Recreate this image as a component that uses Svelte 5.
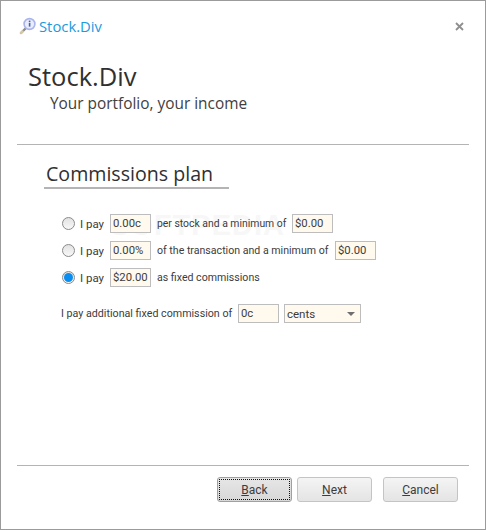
<script>
	let plan = $state('fixed');
	let perStock = $state('0.00c');
	let perStockMin = $state('$0.00');
	let percent = $state('0.00%');
	let percentMin = $state('$0.00');
	let fixed = $state('$20.00');
	let additional = $state('0c');
</script>

<div class="window">
	<header class="titlebar">
		<svg class="logo" width="18" height="18" viewBox="0 0 18 18">
			<path d="M7 11 L2 16" stroke="#8a8a8a" stroke-width="2.4" stroke-linecap="round" />
			<path d="M3.6 14.4 L2 16" stroke="#d8c9a8" stroke-width="2.4" stroke-linecap="round" />
			<circle cx="10.5" cy="7" r="5.4" fill="#e8ecfb" stroke="#a9b4ec" stroke-width="1.6" />
			<rect x="9.8" y="3.6" width="1.6" height="1.4" fill="#4a5fa8" />
			<rect x="9.8" y="5.8" width="1.6" height="3.8" fill="#4a5fa8" />
		</svg>
		<span class="app-name">Stock.Div</span>
		<span class="close">
			<svg width="9" height="9" viewBox="0 0 9 9">
				<path d="M1 1 L8 8 M8 1 L1 8" stroke="#8f8f8f" stroke-width="1.8" />
			</svg>
		</span>
	</header>

	<section class="hero">
		<h1>Stock.Div</h1>
		<p>Your portfolio, your income</p>
	</section>

	<main class="content">
		<h2>Commissions plan</h2>

		<div class="options">
			<span class="watermark">SOFTPEDIA</span>
			<div class="row">
				<input class="radio" type="radio" bind:group={plan} value="stock" />
				<span class="pay">I pay</span>
				<input class="field" bind:value={perStock} />
				<span class="stock-label">per stock and a minimum of</span>
				<input class="field small" bind:value={perStockMin} />
			</div>
			<div class="row">
				<input class="radio" type="radio" bind:group={plan} value="percent" />
				<span class="pay">I pay</span>
				<input class="field" bind:value={percent} />
				<span class="percent-label">of the transaction and a minimum of</span>
				<input class="field small" bind:value={percentMin} />
			</div>
			<div class="row">
				<input class="radio" type="radio" bind:group={plan} value="fixed" />
				<span class="pay">I pay</span>
				<input class="field" bind:value={fixed} />
				<span>as fixed commissions</span>
			</div>
		</div>

		<div class="additional">
			<span class="additional-label">I pay additional fixed commission of</span>
			<input class="field" bind:value={additional} />
			<div class="select">
				<span>cents</span>
				<i class="caret"></i>
			</div>
		</div>
	</main>

	<footer class="footer">
		<button class="btn focused"><span><u>B</u>ack</span></button>
		<button class="btn"><span><u>N</u>ext</span></button>
		<button class="btn cancel"><span><u>C</u>ancel</span></button>
	</footer>
</div>

<style>
	:global(body) {
		background: #fff;
	}

	.window {
		width: 486px;
		height: 530px;
		box-sizing: border-box;
		border: 1px solid #9b9b9b;
		background: #fff;
		display: flex;
		flex-direction: column;
		font-family: Roboto, sans-serif;
		font-size: 10.6px;
		color: #3c3c3c;
	}

	.titlebar {
		display: flex;
		align-items: center;
		height: 30px;
		margin-top: 10px;
		padding-left: 18px;
		padding-right: 21px;
	}

	.logo {
		margin-right: 2px;
	}

	.app-name {
		font-family: 'Open Sans', sans-serif;
		font-size: 14.8px;
		color: #1a9be0;
	}

	.close {
		margin-left: auto;
		display: flex;
	}

	.hero {
		height: 103px;
		border-bottom: 1px solid #b4b4b4;
		margin: 0 16px;
		padding-left: 11px;
	}

	h1 {
		margin: 17px 0 0;
		font-family: 'Open Sans', sans-serif;
		font-weight: 400;
		font-size: 25.5px;
		line-height: 36px;
		color: #303030;
	}

	.hero p {
		margin: 0 0 0 22px;
		font-family: 'Open Sans', sans-serif;
		font-size: 15.4px;
		line-height: 20px;
		color: #404040;
	}

	.content {
		flex: 1;
		padding-left: 43px;
	}

	h2 {
		margin: 16px 0 0;
		width: 185px;
		height: 28px;
		box-sizing: border-box;
		padding-left: 2px;
		border-bottom: 2px solid #b4b4b4;
		font-family: 'Open Sans', sans-serif;
		font-weight: 400;
		font-size: 19.6px;
		line-height: 26px;
		color: #303030;
		white-space: nowrap;
	}

	.options {
		position: relative;
		display: flex;
		flex-direction: column;
		gap: 8px;
		margin-top: 25px;
		padding-left: 18px;
	}

	.watermark {
		position: absolute;
		left: 66px;
		top: -5px;
		font-family: 'Liberation Sans', sans-serif;
		font-weight: 700;
		font-size: 29px;
		letter-spacing: 1px;
		color: #f7f7f7;
		pointer-events: none;
		z-index: 0;
	}

	.row {
		position: relative;
		display: flex;
		align-items: center;
		height: 19px;
		white-space: nowrap;
	}

	.pay {
		width: 25px;
		font-size: 11.5px;
	}

	.stock-label {
		width: 130px;
		font-size: 10.4px;
	}

	.percent-label {
		width: 173px;
	}

	.radio {
		appearance: none;
		width: 13px;
		height: 13px;
		margin: 0 5px 0 0;
		border: 1px solid #8a8a8a;
		border-radius: 50%;
		background: linear-gradient(#e2e2e2, #f8f8f8);
		display: grid;
		place-items: center;
	}

	.radio:checked::before {
		content: '';
		width: 9px;
		height: 9px;
		border-radius: 50%;
		background: #0a8df0;
	}

	.field {
		box-sizing: border-box;
		width: 41px;
		height: 19px;
		margin: 0 6px 0 5px;
		padding: 0 2px;
		border: 1px solid #bdbdbd;
		border-radius: 0;
		background: #fff9ee;
		font-family: Roboto, sans-serif;
		font-size: 11.3px;
		color: #3c3c3c;
		outline: none;
	}

	.field.small {
		margin-left: 5px;
		margin-right: 0;
	}

	.additional {
		display: flex;
		align-items: center;
		height: 19px;
		margin-top: 17px;
		padding-left: 17px;
		white-space: nowrap;
	}

	.additional-label {
		width: 172px;
		font-size: 10.7px;
	}

	.additional .field {
		margin-right: 5px;
	}

	.select {
		box-sizing: border-box;
		width: 77px;
		height: 19px;
		display: flex;
		align-items: center;
		justify-content: space-between;
		padding: 0 5px 0 2px;
		border: 1px solid #bdbdbd;
		background: #fff9ee;
		font-size: 11.5px;
	}

	.caret {
		width: 0;
		height: 0;
		border-left: 4px solid transparent;
		border-right: 4px solid transparent;
		border-top: 4px solid #6f6f6f;
	}

	.footer {
		box-sizing: border-box;
		display: flex;
		align-items: flex-start;
		height: 64px;
		margin: 0 16px;
		border-top: 1px solid #b4b4b4;
		padding: 11px 11px 0 0;
		justify-content: flex-end;
		gap: 5px;
	}

	.btn {
		box-sizing: border-box;
		width: 75px;
		height: 25px;
		padding: 0;
		border: 1px solid #c4c4c4;
		border-radius: 3px;
		background: linear-gradient(#f4f4f4, #e4e4e4);
		font-family: Roboto, sans-serif;
		font-size: 12px;
		color: #3c3c3c;
	}

	.btn.cancel {
		margin-left: 6px;
	}

	.btn.focused {
		border-color: #a0a0a0;
		background: linear-gradient(#e6e6e6, #d8d8d8);
		outline: 1px dotted #111;
		outline-offset: -3px;
	}
</style>
